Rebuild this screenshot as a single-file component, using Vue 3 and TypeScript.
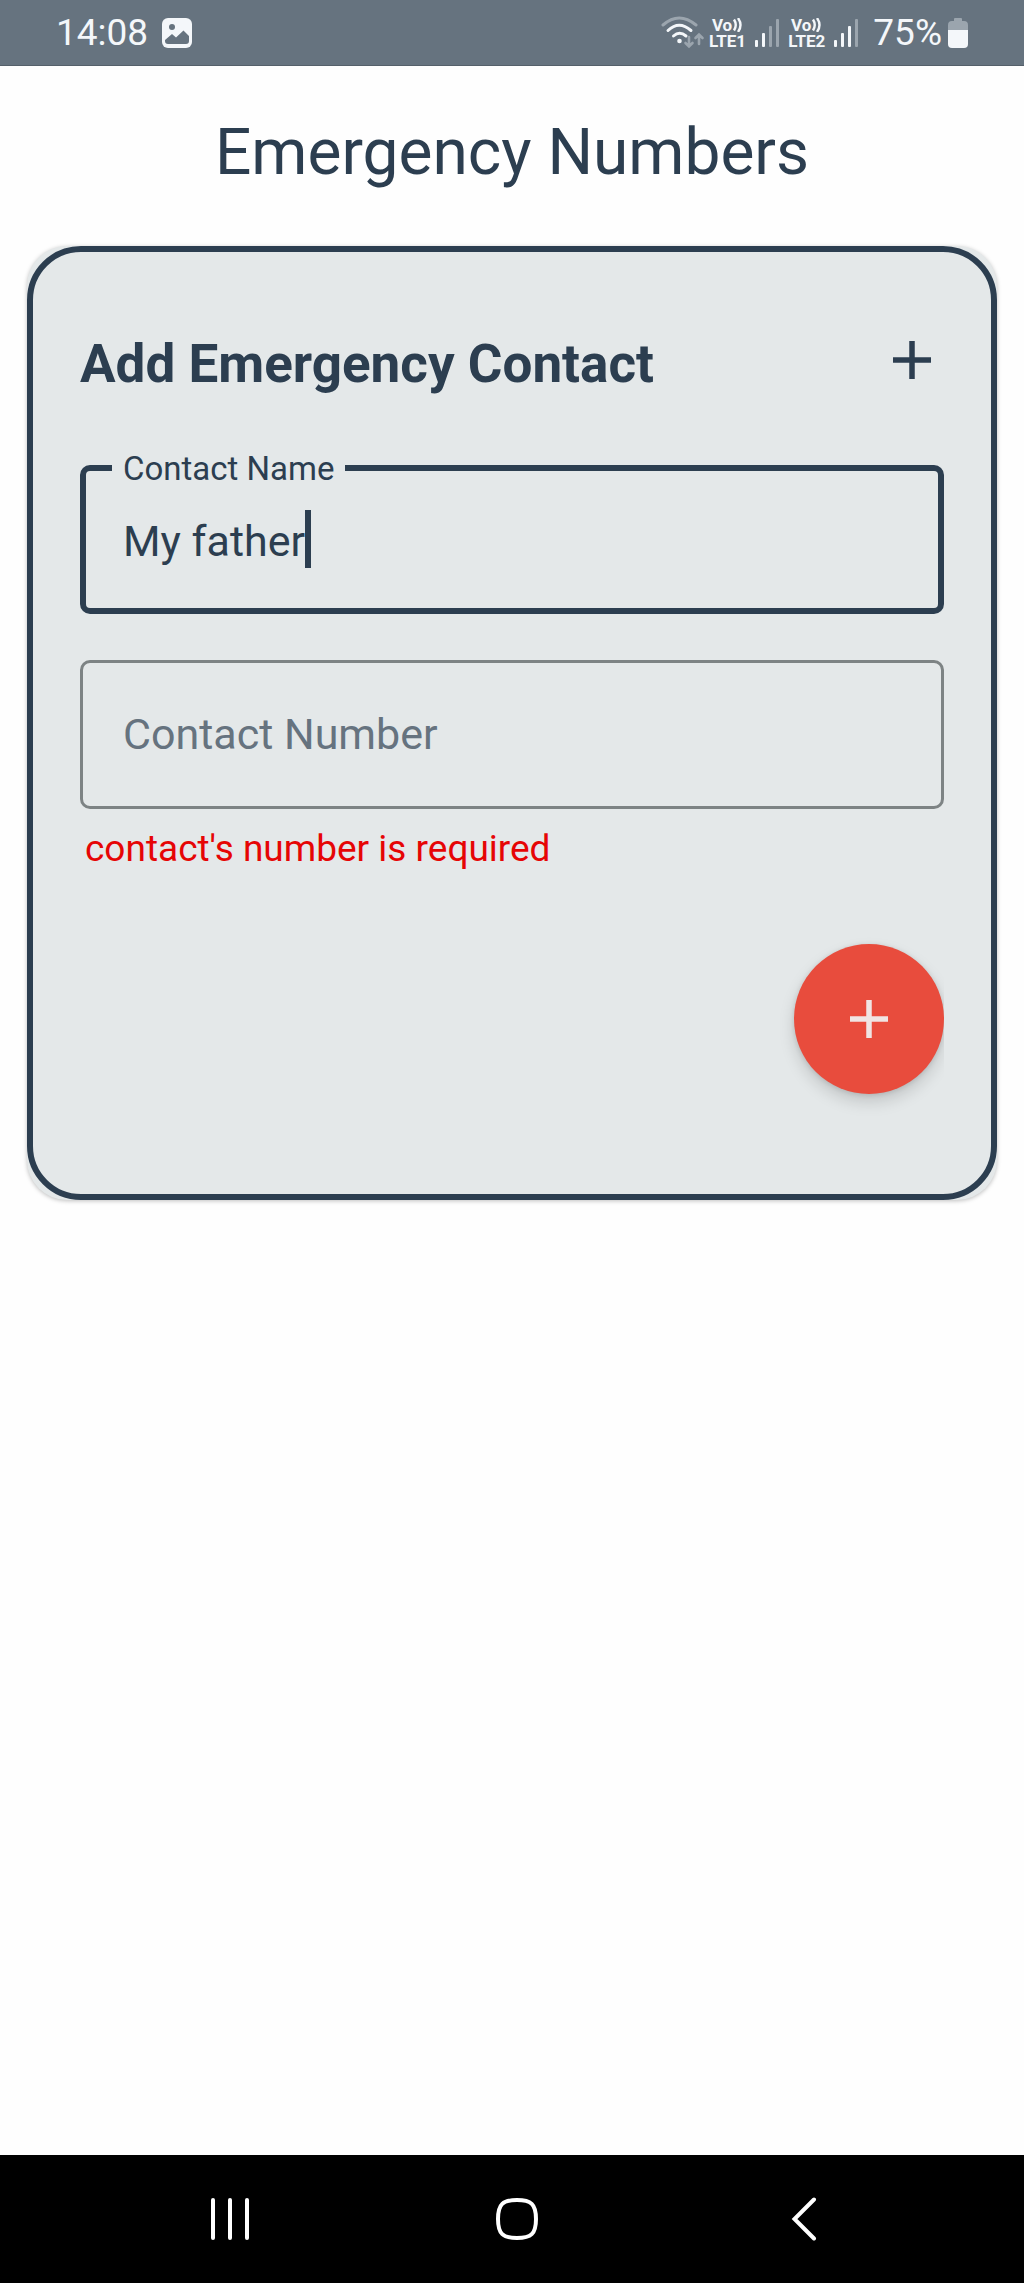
<script setup lang="ts">
import { ref } from 'vue'

const contactName = ref('My father')
const contactNumber = ref('')
const sims = [
  { label: 'LTE1', bars: 2 },
  { label: 'LTE2', bars: 3 },
]
const barHeights = [7, 14, 21, 28]
</script>

<template>
  <div class="screen">
    <header class="status">
      <div class="status-side">
        <span class="status-text">14:08</span>
        <svg class="photo" width="30" height="30" viewBox="0 0 30 30">
          <rect width="30" height="30" rx="6" fill="#f4f7fa" />
          <circle cx="10" cy="9" r="3" fill="#66737f" />
          <path d="M3 22 L10 16 L14 19.500 L21.500 12.500 L27 18 V23 Q27 26 24 26 H6 Q3 26 3 23 Z" fill="#66737f" />
        </svg>
      </div>
      <div class="status-side">
        <svg width="44" height="34" viewBox="0 0 44 34" fill="none" stroke-linecap="round">
          <g stroke-width="3">
            <path d="M2 9 Q18 -5 35 9" stroke="#9ba5ae" />
            <path d="M7 14.500 Q18 4 30 14.500" stroke="#f4f7fa" />
            <path d="M12.500 20 Q18.500 14.500 25 20" stroke="#f4f7fa" />
          </g>
          <circle cx="18.500" cy="25" r="2.300" fill="#f4f7fa" />
          <path d="M28 21 V30 M24.500 27 L28 30.500 L31.500 27 M38 28 V19 M34.500 22 L38 18.500 L41.500 22" stroke="#9ba5ae" stroke-width="2.600" />
        </svg>
        <div v-for="sim in sims" :key="sim.label" class="sim">
          <div class="volte">
            <span class="vo">Vo<svg width="10" height="14" viewBox="0 0 10 14" fill="none" stroke="#f4f7fa" stroke-width="2.400"><path d="M1 1.500 Q4.500 7 1 12.500 M5 0 Q10 7 5 14" /></svg></span>
            <span class="lte">{{ sim.label }}</span>
          </div>
          <svg width="26" height="28" viewBox="0 0 26 28">
            <rect
              v-for="(h, i) in barHeights"
              :key="h"
              :x="i * 7 + 1"
              :y="28 - h"
              width="3"
              :height="h"
              rx="1"
              :fill="i < sim.bars ? '#f4f7fa' : '#9ba5ae'"
            />
          </svg>
        </div>
        <span class="status-text percent">75%</span>
        <svg class="battery" width="20" height="30" viewBox="0 0 20 30">
          <path d="M0 12 V7 Q0 3 4 3 H6 V1 Q6 0 7 0 H13 Q14 0 14 1 V3 H16 Q20 3 20 7 V12 Z" fill="#9ba5ae" />
          <path d="M0 12 H20 V26 Q20 30 16 30 H4 Q0 30 0 26 Z" fill="#f4f7fa" />
        </svg>
      </div>
    </header>

    <main class="content">
      <h1>Emergency Numbers</h1>
      <div class="card">
        <form class="card-inner" @submit.prevent>
          <div class="card-head">
            <h2>Add Emergency Contact</h2>
            <button type="button" class="plain" aria-label="Expand">
              <svg width="38" height="38" viewBox="0 0 38 38" stroke="#2c3e50" stroke-width="5.500"><path d="M19 0 V38 M0 19 H38" /></svg>
            </button>
          </div>
          <div class="field active">
            <label for="name">Contact Name</label>
            <input id="name" v-model="contactName" type="text" />
            <span class="caret"></span>
          </div>
          <div class="field">
            <input id="number" v-model="contactNumber" type="tel" placeholder="Contact Number" aria-label="Contact Number" />
          </div>
          <p class="error">contact's number is required</p>
          <div class="actions">
            <button type="submit" class="fab" aria-label="Add contact">
              <svg width="38" height="38" viewBox="0 0 38 38" stroke="#f0e4e3" stroke-width="5.500"><path d="M19 0 V38 M0 19 H38" /></svg>
            </button>
          </div>
        </form>
      </div>
    </main>

    <nav class="nav">
      <button type="button" aria-label="Recent apps">
        <svg width="44" height="44" viewBox="0 0 44 44" stroke="#fff" stroke-width="4" stroke-linecap="round"><path d="M5 3 V41 M22 3 V41 M39 3 V41" /></svg>
      </button>
      <button type="button" aria-label="Home">
        <svg width="44" height="44" viewBox="0 0 44 44" fill="none" stroke="#fff" stroke-width="4"><path d="M22 3 C36 3 41 7 41 22 C41 37 36 41 22 41 C8 41 3 37 3 22 C3 7 8 3 22 3 Z" /></svg>
      </button>
      <button type="button" aria-label="Back">
        <svg width="44" height="44" viewBox="0 0 44 44" fill="none" stroke="#fff" stroke-width="4" stroke-linecap="round"><path d="M32 2.500 L12.500 22 L32 41.500" /></svg>
      </button>
    </nav>
  </div>
</template>

<style>
body {
  margin: 0;
  background: #fefefe;
}
</style>

<style scoped>
.screen {
  display: flex;
  flex-direction: column;
  min-height: 100vh;
  font-family: Roboto, "Liberation Sans", sans-serif;
  color: #2c3e50;
}
.screen * {
  box-sizing: border-box;
}
svg {
  display: block;
  flex: none;
}
button {
  display: flex;
  align-items: center;
  justify-content: center;
  padding: 0;
  border: 0;
  background: none;
}
.status {
  display: flex;
  justify-content: space-between;
  height: 66px;
  padding: 0 56px;
  background: #66737f;
  border-bottom: 1px solid #55606a;
  color: #f4f7fa;
}
.status-side {
  display: flex;
  align-items: center;
}
.status-text {
  font-size: 37px;
  line-height: 44px;
}
.photo {
  margin-left: 14px;
}
.sim {
  display: flex;
  align-items: center;
  gap: 8px;
  margin: 0 4px;
}
.volte {
  display: flex;
  flex-direction: column;
  align-items: center;
  font-size: 17px;
  font-weight: 700;
  line-height: 16px;
}
.vo {
  display: flex;
  align-items: center;
  gap: 1px;
}
.percent {
  margin-left: 10px;
}
.battery {
  margin-left: 6px;
}
.content {
  flex: 1;
  padding: 0 27px;
}
h1 {
  margin: 51px 0 57px;
  font-size: 64px;
  font-weight: 400;
  line-height: 72px;
  text-align: center;
}
.card {
  border-radius: 40px;
  background: #e4e8e9;
  box-shadow: 0 1px 4px rgba(0, 0, 0, 0.25);
}
.card-inner {
  padding: 68px 47px 100px;
  border: 6px solid #2c3e50;
  border-radius: 54px;
}
.card-head {
  display: flex;
  align-items: flex-start;
  justify-content: space-between;
  height: 84px;
  margin-bottom: 61px;
}
h2 {
  margin: 0;
  font-size: 53px;
  font-weight: 700;
  line-height: 88px;
}
.plain {
  width: 64px;
  height: 80px;
}
.field {
  position: relative;
  height: 149px;
  margin-bottom: 46px;
  border: 3px solid #7d8384;
  border-radius: 10px;
}
.field.active {
  border: 6px solid #2c3e50;
}
input {
  width: 100%;
  height: 100%;
  padding: 0 40px 2px;
  border: 0;
  outline: 0;
  background: none;
  color: #2c3e50;
  font-family: inherit;
  font-size: 43px;
}
.active input {
  padding: 2px 37px 0;
}
input::placeholder {
  color: #66737f;
  opacity: 1;
}
label {
  position: absolute;
  top: -20px;
  left: 26px;
  padding: 0 11px;
  background: #e4e8e9;
  font-size: 33px;
  line-height: 36px;
}
.caret {
  position: absolute;
  top: 39px;
  left: 219px;
  width: 6px;
  height: 58px;
  background: #2c3e50;
}
.error {
  margin: -28px 0 73px 5px;
  color: #e60505;
  font-size: 37px;
  line-height: 44px;
}
.actions {
  display: flex;
  justify-content: flex-end;
  clip-path: inset(-24px 0 -40px 0);
}
.fab {
  width: 150px;
  height: 150px;
  border-radius: 50%;
  background: #e84c3d;
  box-shadow: 0 8px 16px rgba(0, 0, 0, 0.15), 0 1px 5px rgba(0, 0, 0, 0.12);
}
.nav {
  display: flex;
  height: 128px;
  padding: 0 76px 0 86px;
  background: #000;
}
.nav button {
  flex: 1;
}
</style>
